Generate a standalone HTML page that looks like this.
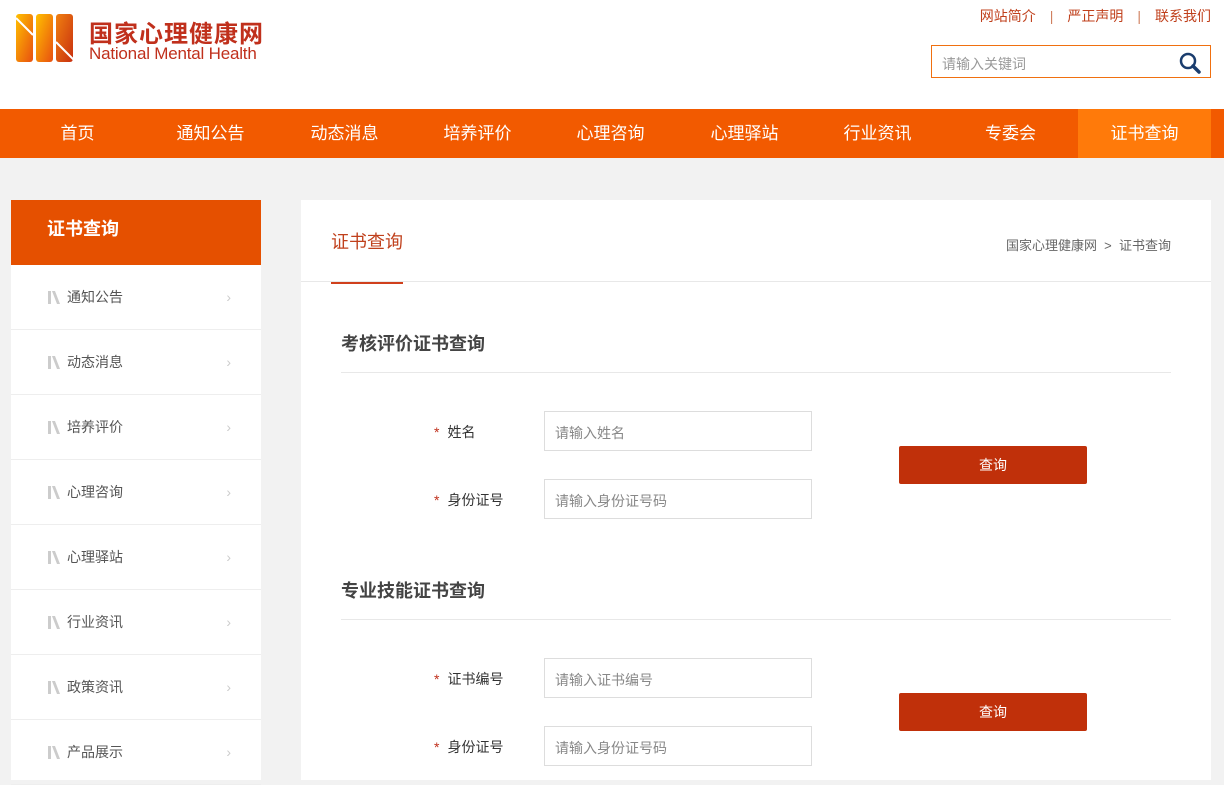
<!DOCTYPE html>
<html><head><meta charset="utf-8"><style>
*{margin:0;padding:0;box-sizing:border-box}
body{width:1224px;height:771px;overflow:hidden;background:#f2f2f2;font-family:"Liberation Sans","Noto Sans CJK SC",sans-serif;position:relative}
.top{position:absolute;left:0;top:0;width:1224px;height:109px;background:#fff}
.logo{position:absolute;left:16px;top:14px}
.t1{position:absolute;left:89px;top:14px;font-size:24px;font-weight:bold;color:#c0301c;letter-spacing:1px}
.t2{position:absolute;left:89px;top:44px;font-size:17px;color:#c0301c;letter-spacing:-0.2px}
.links{position:absolute;right:13px;top:6px;font-size:14px;color:#c0401c}
.links span{margin:0 14px;color:#d08060}
.search{position:absolute;left:931px;top:45px;width:280px;height:33px;border:1px solid #f07010;font-size:14px;color:#999;padding:8px 10px}
.nav{position:absolute;left:0;top:109px;width:1224px;height:49px;background:#f25a00}
.nav div{position:absolute;top:0;width:133px;height:49px;line-height:49px;text-align:center;color:#fff;font-size:17px}
.side{position:absolute;left:11px;top:200px;width:250px;height:580px;background:#fff}
.sh{height:65px;background:#e55000;color:#fff;font-size:18px;font-weight:bold;line-height:58px;padding-left:36px}
.si{height:65px;border-bottom:1px solid #eee;line-height:64px;padding-left:56px;font-size:14px;color:#555;position:relative}
.si svg{position:absolute;left:36px;top:26px}
.si b{position:absolute;right:30px;top:0;color:#ccc;font-weight:normal;font-size:14px}
.main{position:absolute;left:301px;top:200px;width:910px;height:580px;background:#fff}
.mh{height:82px;border-bottom:1px solid #e8e8e8;position:relative}
.mt{position:absolute;left:30px;top:28px;font-size:18px;color:#c0401c;padding-bottom:28px;border-bottom:2px solid #d0401c}
.bc{position:absolute;right:40px;top:35px;font-size:13px;color:#666}
.sec{position:absolute;left:40px;width:830px;border-bottom:1px solid #e8e8e8;font-size:18px;font-weight:bold;color:#444;padding-bottom:16px}
.lab{position:absolute;font-size:14px;color:#333}
.lab em{color:#c0301c;font-style:normal;margin-right:8px}
.inp{position:absolute;left:243px;width:268px;height:40px;border:1px solid #ddd;font-size:14px;color:#888;padding:11px 10px}
.btn{position:absolute;left:598px;width:188px;height:38px;background:#c0300a;color:#fff;font-size:14px;text-align:center;line-height:38px;border-radius:2px}
</style></head><body>
<div class="top">
<svg class="logo" width="58" height="50" viewBox="0 0 58 50"><defs><linearGradient id="g" x1="0" y1="0" x2="1" y2="1"><stop offset="0" stop-color="#ffc000"/><stop offset="1" stop-color="#e85010"/></linearGradient><linearGradient id="h" x1="0" y1="0" x2="1" y2="1"><stop offset="0" stop-color="#f08010"/><stop offset="1" stop-color="#c83010"/></linearGradient></defs><rect x="0" y="0" width="17" height="48" rx="3" fill="url(#g)"/><rect x="20" y="0" width="17" height="48" rx="3" fill="url(#g)"/><rect x="40" y="0" width="17" height="48" rx="3" fill="url(#h)"/><path d="M0 4 L17 21" stroke="#fff" stroke-width="2"/><path d="M40 28 L58 46" stroke="#fff" stroke-width="2"/></svg>
<div class="t1">国家心理健康网</div>
<div class="t2">National Mental Health</div>
<div class="links">网站简介<span>|</span>严正声明<span>|</span>联系我们</div>
<div class="search">请输入关键词
<svg style="position:absolute;right:8px;top:5px" width="24" height="24" viewBox="0 0 24 24"><circle cx="10" cy="10" r="7" fill="none" stroke="#1a3d6e" stroke-width="2.5"/><path d="M15 15 L21 21" stroke="#1a3d6e" stroke-width="3.5" stroke-linecap="round"/></svg></div>
</div>
<div class="nav">
<div style="left:11px">首页</div><div style="left:144px">通知公告</div><div style="left:278px">动态消息</div><div style="left:411px">培养评价</div><div style="left:544px">心理咨询</div><div style="left:678px">心理驿站</div><div style="left:811px">行业资讯</div><div style="left:944px">专委会</div><div style="left:1078px;background:#ff7a0a">证书查询</div>
</div>
<div class="side">
<div class="sh">证书查询</div>
<div class="si"><svg width="15" height="13" viewBox="0 0 15 13"><path d="M1 0h3v13h-3z M5 0l5 13h3l-5-13z" fill="#ccc"/></svg>通知公告<b>›</b></div>
<div class="si"><svg width="15" height="13" viewBox="0 0 15 13"><path d="M1 0h3v13h-3z M5 0l5 13h3l-5-13z" fill="#ccc"/></svg>动态消息<b>›</b></div>
<div class="si"><svg width="15" height="13" viewBox="0 0 15 13"><path d="M1 0h3v13h-3z M5 0l5 13h3l-5-13z" fill="#ccc"/></svg>培养评价<b>›</b></div>
<div class="si"><svg width="15" height="13" viewBox="0 0 15 13"><path d="M1 0h3v13h-3z M5 0l5 13h3l-5-13z" fill="#ccc"/></svg>心理咨询<b>›</b></div>
<div class="si"><svg width="15" height="13" viewBox="0 0 15 13"><path d="M1 0h3v13h-3z M5 0l5 13h3l-5-13z" fill="#ccc"/></svg>心理驿站<b>›</b></div>
<div class="si"><svg width="15" height="13" viewBox="0 0 15 13"><path d="M1 0h3v13h-3z M5 0l5 13h3l-5-13z" fill="#ccc"/></svg>行业资讯<b>›</b></div>
<div class="si"><svg width="15" height="13" viewBox="0 0 15 13"><path d="M1 0h3v13h-3z M5 0l5 13h3l-5-13z" fill="#ccc"/></svg>政策资讯<b>›</b></div>
<div class="si"><svg width="15" height="13" viewBox="0 0 15 13"><path d="M1 0h3v13h-3z M5 0l5 13h3l-5-13z" fill="#ccc"/></svg>产品展示<b>›</b></div>
</div>
<div class="main">
<div class="mh"><div class="mt">证书查询</div><div class="bc">国家心理健康网 &nbsp;&gt;&nbsp; 证书查询</div></div>
<div class="sec" style="top:130px">考核评价证书查询</div>
<div class="lab" style="left:133px;top:222px"><em>*</em>姓名</div>
<div class="inp" style="top:211px">请输入姓名</div>
<div class="lab" style="left:133px;top:290px"><em>*</em>身份证号</div>
<div class="inp" style="top:279px">请输入身份证号码</div>
<div class="btn" style="top:246px">查询</div>
<div class="sec" style="top:377px">专业技能证书查询</div>
<div class="lab" style="left:133px;top:469px"><em>*</em>证书编号</div>
<div class="inp" style="top:458px">请输入证书编号</div>
<div class="lab" style="left:133px;top:537px"><em>*</em>身份证号</div>
<div class="inp" style="top:526px">请输入身份证号码</div>
<div class="btn" style="top:493px">查询</div>
</div>
</body></html>
